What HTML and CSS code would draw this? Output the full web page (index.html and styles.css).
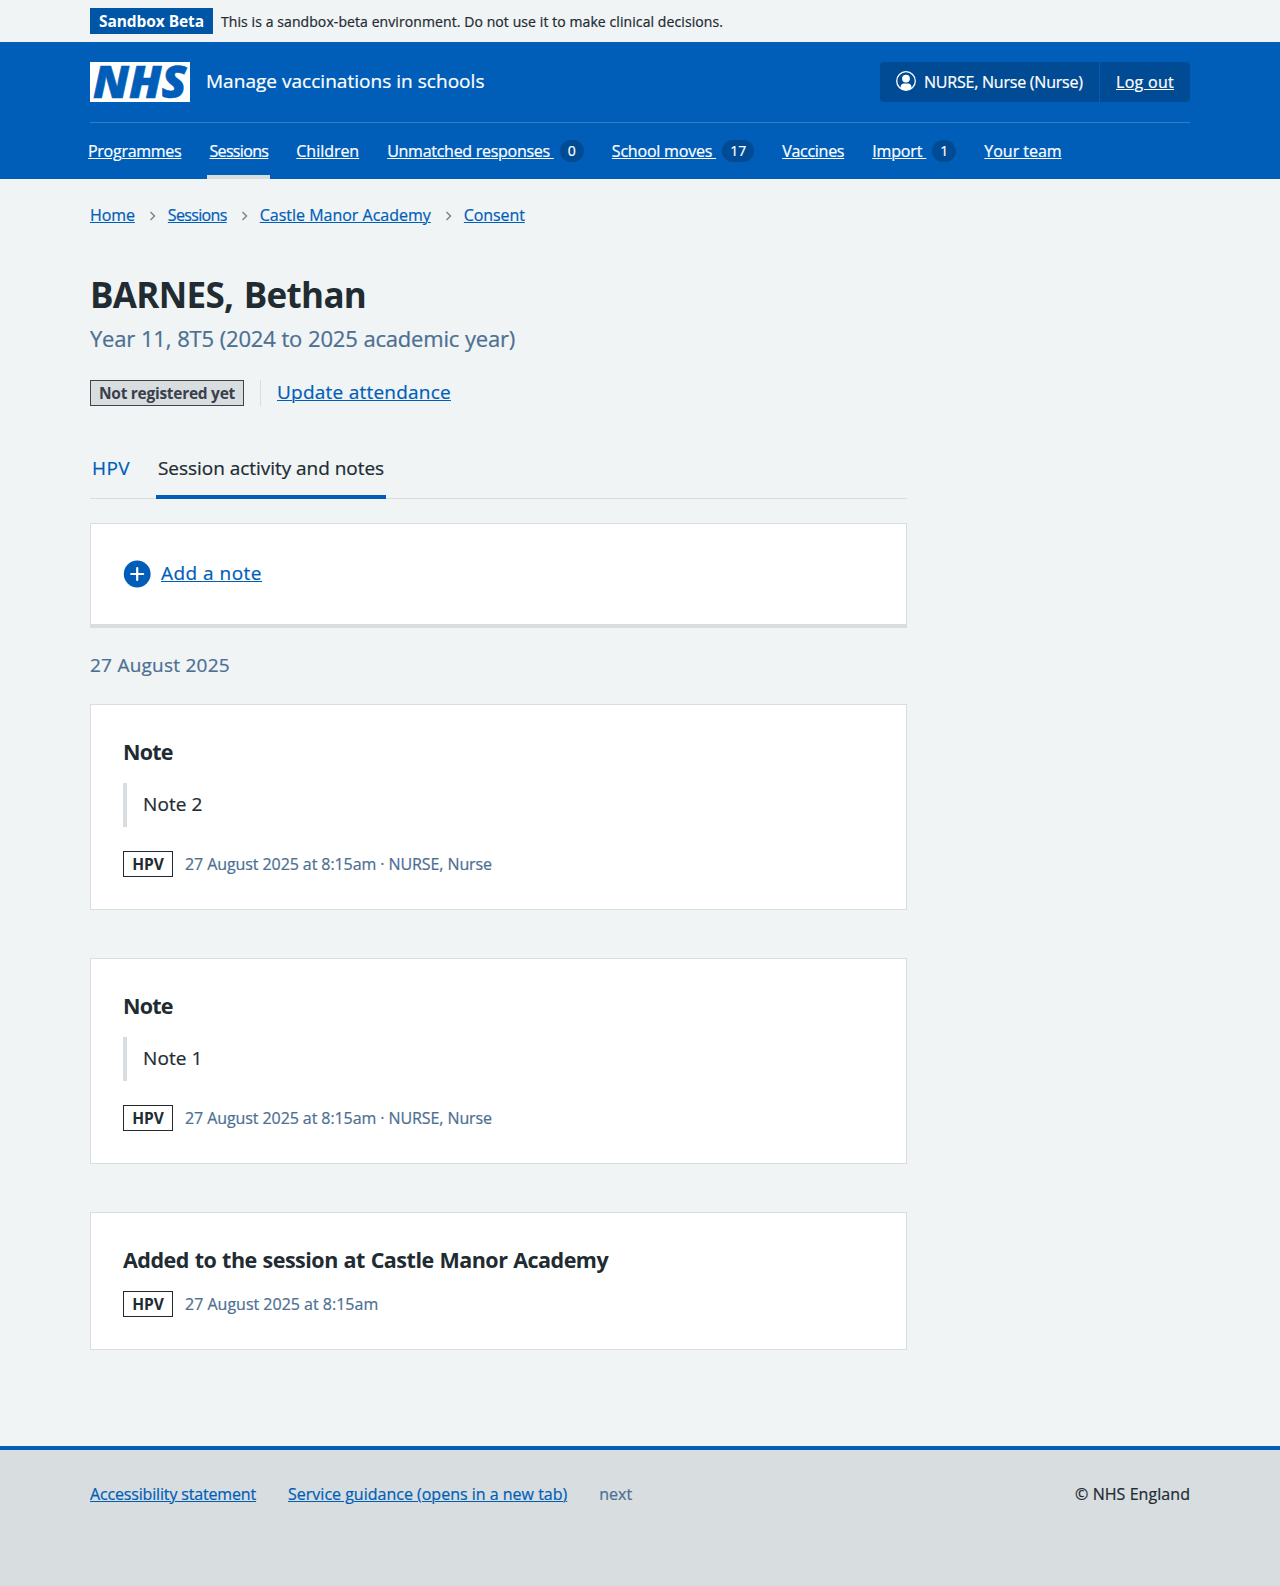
FILE: index.html
```html
<!DOCTYPE html>
<html lang="en">
<head>
<meta charset="utf-8">
<title>BARNES, Bethan – Manage vaccinations in schools</title>
<link rel="stylesheet" href="styles.css">
</head>
<body>
<div class="environment">
  <div class="container environment-row">
    <strong class="tag tag-environment">Sandbox Beta</strong>
    <span class="environment-text">This is a sandbox-beta environment. Do not use it to make clinical decisions.</span>
  </div>
</div>

<header class="header">
  <div class="container">
    <div class="header-top">
      <a class="logo" href="#">
        <svg width="100" height="40" viewBox="0 0 100 40" role="img" aria-label="NHS">
          <rect width="100" height="40" fill="#fff"/>
          <text class="logo-text" x="3" y="36" textLength="93.500" lengthAdjust="spacingAndGlyphs">NHS</text>
        </svg>
      </a>
      <a class="service-name" href="#">Manage vaccinations in schools</a>
      <div class="account">
        <div class="account-item account-user">
          <svg width="20" height="20" viewBox="0 0 20 20" aria-hidden="true">
            <circle cx="10" cy="10" r="9.3" fill="none" stroke="#fff" stroke-width="1.3"/>
            <circle cx="10" cy="7.6" r="3.9" fill="#fff"/>
            <path d="M4.6 17.4V16c0-2.2 1.4-3.5 3.2-3.5h4.400c1.800 0 3.200 1.300 3.200 3.500v1.400A9 9 0 0 1 10 19.200a9 9 0 0 1-5.400-1.800z" fill="#fff"/>
          </svg>
          <span>NURSE, Nurse (Nurse)</span>
        </div>
        <div class="account-item"><a class="logout" href="#">Log out</a></div>
      </div>
    </div>
    <nav class="nav">
      <a class="nav-link" href="#"><span>Programmes</span></a>
      <a class="nav-link nav-current tight" href="#"><span>Sessions</span></a>
      <a class="nav-link loose" href="#"><span>Children</span></a>
      <a class="nav-link" href="#"><span>Unmatched responses </span><b class="count">0</b></a>
      <a class="nav-link moves" href="#"><span>School moves </span><b class="count">17</b></a>
      <a class="nav-link" href="#"><span>Vaccines</span></a>
      <a class="nav-link import" href="#"><span>Import </span><b class="count">1</b></a>
      <a class="nav-link loose" href="#"><span>Your team</span></a>
    </nav>
  </div>
</header>

<main class="container main">
  <nav class="breadcrumb">
    <a href="#">Home</a>
    <svg class="chevron" width="8" height="10" viewBox="0 0 8 10"><path d="M1.500 1l4 4-4 4"/></svg>
    <a class="tight" href="#">Sessions</a>
    <svg class="chevron" width="8" height="10" viewBox="0 0 8 10"><path d="M1.500 1l4 4-4 4"/></svg>
    <a href="#">Castle Manor Academy</a>
    <svg class="chevron" width="8" height="10" viewBox="0 0 8 10"><path d="M1.500 1l4 4-4 4"/></svg>
    <a class="crumb-last" href="#">Consent</a>
  </nav>

  <h1 class="title">BARNES, Bethan</h1>
  <p class="caption">Year 11, 8T5 (2024 to 2025 academic year)</p>

  <div class="status">
    <strong class="tag tag-grey">Not registered yet</strong>
    <a class="status-action" href="#">Update attendance</a>
  </div>

  <div class="column">
    <nav class="tabs">
      <a class="tab tab-hpv" href="#">HPV</a>
      <a class="tab tab-current" href="#">Session activity and notes</a>
    </nav>

    <section class="card card-action">
      <svg width="28" height="28" viewBox="0 0 28 28" aria-hidden="true">
        <circle cx="14.200" cy="14" r="13.400" fill="#005eb8"/>
        <path d="M14.200 8v12M8.200 14h12" stroke="#fff" stroke-width="2.200" stroke-linecap="round"/>
      </svg>
      <a class="add-note" href="#">Add a note</a>
    </section>

    <h2 class="date">27 August 2025</h2>

    <div class="cards">
      <article class="card">
        <h3 class="card-title short">Note</h3>
        <blockquote class="quote">Note 2</blockquote>
        <div class="meta"><strong class="tag tag-white">HPV</strong><span class="meta-text">27 August 2025 at 8:15am · NURSE, Nurse</span></div>
      </article>
      <article class="card">
        <h3 class="card-title short">Note</h3>
        <blockquote class="quote">Note 1</blockquote>
        <div class="meta"><strong class="tag tag-white">HPV</strong><span class="meta-text">27 August 2025 at 8:15am · NURSE, Nurse</span></div>
      </article>
      <article class="card card-event">
        <h3 class="card-title">Added to the session at Castle Manor Academy</h3>
        <div class="meta"><strong class="tag tag-white">HPV</strong><span class="meta-text">27 August 2025 at 8:15am</span></div>
      </article>
    </div>
  </div>
</main>

<footer class="footer">
  <div class="container footer-row">
    <a class="footer-accessibility" href="#">Accessibility statement</a>
    <a href="#">Service guidance (opens in a new tab)</a>
    <span class="release">next</span>
    <span class="copyright">© NHS England</span>
  </div>
</footer>
</body>
</html>
```
FILE: styles.css
```css
* { box-sizing: border-box; }

body {
  margin: 0;
  min-height: 1586px;
  display: flex;
  flex-direction: column;
  background: #f0f4f5;
  color: #212b32;
  font: 400 16px/24px "Open Sans", "Noto Sans", sans-serif;
  -webkit-text-stroke: 0.22px;
}

h1, h2, h3, p, blockquote { margin: 0; }

a {
  color: #005eb8;
  text-decoration-thickness: 1px;
  text-underline-offset: 1px;
}

.container { width: 1100px; margin: 0 auto; }

/* Tags */
.tag {
  flex: none;
  height: 26px;
  border: 1px solid;
  font-size: 15.5px;
  font-weight: 700;
  line-height: 24px;
  text-align: center;
  white-space: nowrap;
  -webkit-text-stroke: 0;
}
.tag-environment {
  width: 123px;
  border-color: #0055a6;
  background: #0055a6;
  color: #fff;
  letter-spacing: -0.07px;
}
.tag-grey {
  width: 154px;
  border-color: #463f49;
  background: #d8dde0;
  color: #3b3f4b;
  letter-spacing: -0.28px;
}
.tag-white {
  width: 50px;
  border-color: #212b32;
  background: #fff;
}

/* Environment banner */
.environment { padding: 8px 0; }
.environment-row { display: flex; gap: 8px; }
.environment-text {
  font-size: 14px;
  line-height: 27px;
  height: 26px;
  letter-spacing: 0.087px;
}

/* Header */
.header { height: 137px; background: #005eb8; }
.header a { color: #fff; }
.header-top {
  display: flex;
  align-items: flex-start;
  height: 81px;
  padding-top: 20px;
  border-bottom: 1px solid #337ec6;
}
.logo { display: block; height: 40px; }
.logo svg { display: block; overflow: visible; }
.logo-text {
  font-size: 45px;
  font-weight: 800;
  font-style: italic;
  fill: #005eb8;
  stroke: #005eb8;
  stroke-width: 0.6;
}
.service-name {
  margin-left: 16px;
  font-size: 19px;
  line-height: 38px;
  letter-spacing: 0.03px;
  text-decoration: none;
}
.account {
  display: flex;
  gap: 1px;
  margin-left: auto;
  border-radius: 4px;
  overflow: hidden;
  color: #fff;
}
.account-item {
  display: flex;
  gap: 8px;
  padding: 0 16px;
  background: #004b93;
  line-height: 40px;
  letter-spacing: 0.29px;
}
.account-user { width: 219px; letter-spacing: -0.22px; white-space: nowrap; }
.account-user svg { flex: none; margin-top: 9px; }

.nav { display: flex; gap: 24px; margin-left: -4px; height: 56px; }
.nav-link {
  display: flex;
  align-items: center;
  padding: 0 2px;
  white-space: pre;
  letter-spacing: -0.27px;
  text-decoration: none;
}
.nav-link span {
  text-decoration: underline;
  text-decoration-thickness: 1px;
  text-underline-offset: 1px;
}
.nav-current { box-shadow: inset 0 -4px #d8dde0; }
.nav-link.moves { letter-spacing: -0.2px; }
.nav-link.import { letter-spacing: -0.14px; }
.count {
  margin-left: 6px;
  min-width: 24px;
  padding: 0 8px;
  border-radius: 12px;
  background: #004b93;
  font-size: 14px;
  font-weight: 400;
  line-height: 22px;
  text-align: center;
  letter-spacing: 0;
}
.tight, .nav-link.tight { letter-spacing: -0.66px; }
.loose, .nav-link.loose { letter-spacing: -0.03px; }

/* Page heading */
.main { padding-top: 24px; }
.breadcrumb { display: flex; align-items: center; }
.breadcrumb a:first-child { letter-spacing: -0.1px; }
.crumb-last { letter-spacing: -0.1px; }
.chevron {
  margin: 2px 11px 0 14px;
  fill: none;
  stroke: #8b8088;
  stroke-width: 1.500;
}
.title {
  margin-top: 46px;
  font-size: 35px;
  line-height: 44px;
  letter-spacing: -0.68px;
  word-spacing: 2px;
  -webkit-text-stroke: 0;
}
.caption {
  margin-top: 5px;
  color: #4c6f92;
  font-size: 22px;
  line-height: 32px;
  letter-spacing: -0.22px;
  word-spacing: 0.5px;
}
.status { display: flex; margin-top: 26px; height: 26px; }
.status-action {
  margin-left: 16px;
  padding-left: 16px;
  border-left: 1px solid #d8dde0;
  font-size: 19px;
  line-height: 24px;
  letter-spacing: 0.23px;
}

/* Tabs */
.column { width: 817px; }
.tabs {
  display: flex;
  gap: 24px;
  margin-top: 35px;
  box-shadow: inset 0 -1px #d8dde0;
}
.tab {
  padding: 0 2px;
  border-bottom: 4px solid transparent;
  font-size: 19px;
  line-height: 54px;
  text-decoration: none;
}
.tab-hpv { letter-spacing: 0.4px; }
.tab-current {
  border-color: #005eb8;
  color: #212b32;
  letter-spacing: -0.04px;
}

/* Cards */
.cards { display: grid; gap: 48px; margin-top: 25px; }
.card {
  padding: 32px;
  border: 1px solid #d8dde0;
  background: #fff;
}
.card-action {
  display: flex;
  align-items: center;
  gap: 10px;
  height: 105px;
  margin-top: 24px;
  border-bottom-width: 4px;
}
.add-note {
  padding-bottom: 2px;
  font-size: 19px;
  letter-spacing: 0.48px;
}
.date {
  margin-top: 23px;
  color: #4c6f92;
  font-size: 19px;
  font-weight: 400;
  line-height: 28px;
  letter-spacing: 0.24px;
}
.card-title {
  font-size: 21.5px;
  line-height: 30px;
  letter-spacing: -0.5px;
  word-spacing: 0.7px;
  -webkit-text-stroke: 0;
}
.card-title.short { letter-spacing: -0.8px; }
.quote {
  margin-top: 16px;
  padding: 7px 0 9px 16px;
  border-left: 4px solid #d8dde0;
  font-size: 19px;
  line-height: 28px;
  letter-spacing: 0.1px;
}
.meta { display: flex; gap: 12px; margin-top: 24px; }
.card-event .meta { margin-top: 16px; }
.meta-text { color: #4c6f92; line-height: 26px; letter-spacing: -0.084px; }
.card-event .meta-text { letter-spacing: 0; }

/* Footer */
.footer {
  flex: 1;
  margin-top: 96px;
  padding-top: 32px;
  border-top: 4px solid #005eb8;
  background: #d8dde0;
}
.footer-row { display: flex; gap: 32px; }
.footer-accessibility { letter-spacing: -0.16px; }
.release { color: #4c6f92; }
.copyright { margin-left: auto; letter-spacing: 0.06px; }
```
